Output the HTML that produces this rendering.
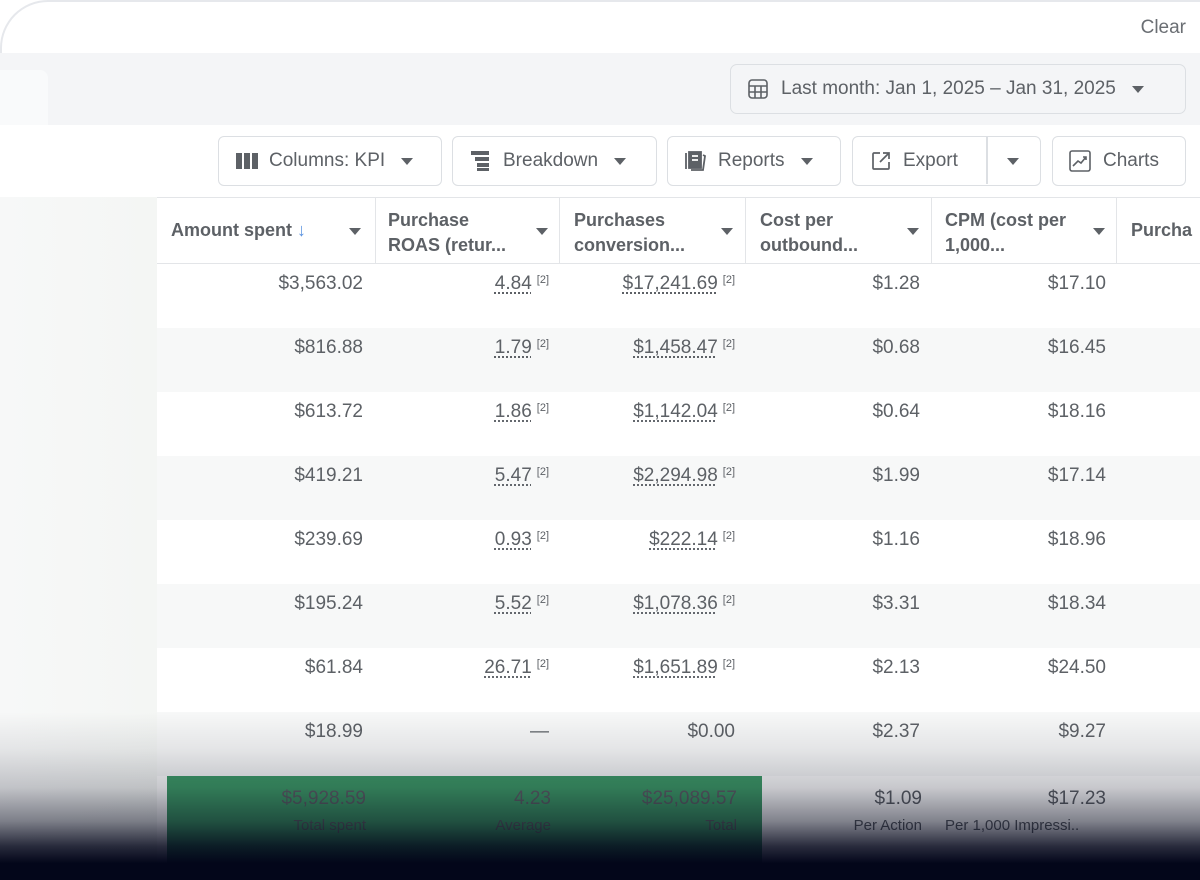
<!DOCTYPE html>
<html><head><style>
*{margin:0;padding:0;box-sizing:border-box}
body{width:1200px;height:880px;overflow:hidden;background:#fff;font-family:"Liberation Sans",sans-serif;color:#5d6166;position:relative}
.abs{position:absolute}
.top{left:0;top:0;width:1200px;height:53px;background:#fff;border-top:2px solid #e6e8ec;border-left:2px solid #e6e8ec;border-top-left-radius:48px}
.grey{left:0;top:53px;width:1200px;height:72px;background:#f4f5f7}
.btn{position:absolute;border:1.5px solid #dcdfe3;border-radius:6px;background:#fff;height:50px;top:136px;font-size:19px;color:#5d6166;display:flex;align-items:center;padding-left:16px}
.tri{display:inline-block;width:0;height:0;border-left:6px solid transparent;border-right:6px solid transparent;border-top:7px solid #5d6166}
.row{position:absolute;left:157px;width:1043px;height:64px}
.c{position:absolute;font-size:19px;text-align:right}
.u{text-decoration:underline dotted;text-underline-offset:4px}
sup{font-size:11px;margin-left:5px;vertical-align:6px;text-decoration:none;display:inline-block}
.h{position:absolute;top:208px;font-size:18px;font-weight:bold;line-height:25px;color:#5d6166}
.vl{position:absolute;top:197px;height:67px;width:1px;background:#e3e5e8}
</style></head><body>
<div class="abs top"></div>
<div class="abs" style="right:14px;top:17px;font-size:19px;color:#6a6e73">Clear</div>
<div class="abs grey"></div>
<div class="abs" style="left:0;top:70px;width:48px;height:55px;background:#f9fafb;border-top-right-radius:8px"></div>
<div class="abs" style="left:0;top:197px;width:157px;height:683px;background:linear-gradient(90deg,#f7f8f8,#f4f6f4)"></div>
<div class="abs" style="left:730px;top:64px;width:456px;height:50px;border:1.5px solid #dcdfe3;border-radius:7px;background:#f4f5f7;font-size:19px;display:flex;align-items:center;padding-left:16px">
<svg width="22" height="22" viewBox="0 0 22 22" fill="none" stroke="#5d6166" stroke-width="1.6"><rect x="2" y="2" width="18" height="18" rx="3"/><path d="M2 8h18M2 14h18M8 8v12M14 8v12"/></svg>
<span style="margin-left:12px">Last month: Jan 1, 2025 – Jan 31, 2025</span><span class="tri" style="margin-left:16px"></span></div>

<div class="btn" style="left:218px;width:224px"><svg width="24" height="20" viewBox="0 0 24 20" fill="#5d6166"><rect x="1" y="2" width="6" height="16"/><rect x="9" y="2" width="6" height="16"/><rect x="17" y="2" width="6" height="16"/></svg><span style="margin-left:10px">Columns: KPI</span><span class="tri" style="margin-left:16px"></span></div>
<div class="btn" style="left:452px;width:205px"><svg width="22" height="22" viewBox="0 0 22 22" fill="#5d6166"><rect x="2" y="1" width="18" height="4"/><rect x="6" y="7" width="14" height="4"/><rect x="8" y="13" width="12" height="4"/><rect x="8" y="18" width="12" height="3"/></svg><span style="margin-left:12px">Breakdown</span><span class="tri" style="margin-left:16px"></span></div>
<div class="btn" style="left:667px;width:174px"><svg width="24" height="22" viewBox="0 0 24 22" fill="none" stroke="#5d6166" stroke-width="1.8"><rect x="5" y="2" width="12" height="16" fill="#5d6166"/><path d="M2 3v16M19 5l2 1-2 14H7" /><path d="M8 6h6M8 10h6" stroke="#fff"/></svg><span style="margin-left:10px">Reports</span><span class="tri" style="margin-left:16px"></span></div>
<div class="btn" style="left:852px;width:189px;padding-left:18px"><svg width="20" height="20" viewBox="0 0 20 20" fill="none" stroke="#5d6166" stroke-width="1.7"><path d="M9 2H3a1 1 0 0 0-1 1v14a1 1 0 0 0 1 1h14a1 1 0 0 0 1-1v-6M12 2h6v6M18 2l-9 9"/></svg><span style="margin-left:12px">Export</span><span style="position:absolute;left:133px;top:0;width:1.5px;height:47px;background:#dcdfe3"></span><span class="tri" style="position:absolute;left:154px;top:21px"></span></div>
<div class="btn" style="left:1052px;width:134px"><svg width="22" height="22" viewBox="0 0 22 22" fill="none" stroke="#5d6166" stroke-width="1.6"><rect x="1" y="1" width="20" height="20" rx="2"/><path d="M4 16l5-5 3 2 5-6M14 7h3v3"/></svg><span style="margin-left:12px">Charts</span></div>

<div class="abs" style="left:157px;top:197px;width:1043px;height:67px;border-top:1.5px solid #e3e5e8;border-bottom:1.5px solid #e3e5e8;background:#fff"></div>
<div class="vl" style="left:375px"></div><div class="vl" style="left:559px"></div><div class="vl" style="left:745px"></div><div class="vl" style="left:931px"></div><div class="vl" style="left:1116px"></div>
<div class="h" style="left:171px;top:218px">Amount spent <span style="color:#5b93e0;font-weight:normal">↓</span></div>
<div class="h" style="left:388px">Purchase<br>ROAS (retur...</div>
<div class="h" style="left:574px">Purchases<br>conversion...</div>
<div class="h" style="left:760px">Cost per<br>outbound...</div>
<div class="h" style="left:945px">CPM (cost per<br>1,000...</div>
<div class="h" style="left:1131px;top:218px">Purcha</div>
<span class="tri abs" style="left:349px;top:228px"></span><span class="tri abs" style="left:536px;top:228px"></span><span class="tri abs" style="left:721px;top:228px"></span><span class="tri abs" style="left:907px;top:228px"></span><span class="tri abs" style="left:1093px;top:228px"></span>

<div id="rows"></div>
<script>
var d=[["$3,563.02","4.84","$17,241.69","$1.28","$17.10"],["$816.88","1.79","$1,458.47","$0.68","$16.45"],["$613.72","1.86","$1,142.04","$0.64","$18.16"],["$419.21","5.47","$2,294.98","$1.99","$17.14"],["$239.69","0.93","$222.14","$1.16","$18.96"],["$195.24","5.52","$1,078.36","$3.31","$18.34"],["$61.84","26.71","$1,651.89","$2.13","$24.50"],["$18.99","—","$0.00","$2.37","$9.27"]];
var h="";
d.forEach(function(r,i){var t=264+i*64;
h+='<div class="row" style="top:'+t+'px;background:'+(i%2?'#f7f8f8':'#fff')+'"></div>';
var y=t+9;
h+='<div class="c" style="right:837px;top:'+y+'px">'+r[0]+'</div>';
if(r[1]=="—")h+='<div class="c" style="right:651px;top:'+y+'px">—</div>';
else h+='<div class="c" style="right:651px;top:'+y+'px"><span class="u">'+r[1]+'</span><sup>[2]</sup></div>';
if(i==7)h+='<div class="c" style="right:465px;top:'+y+'px">'+r[2]+'</div>';
else h+='<div class="c" style="right:465px;top:'+y+'px"><span class="u">'+r[2]+'</span><sup>[2]</sup></div>';
h+='<div class="c" style="right:280px;top:'+y+'px">'+r[3]+'</div>';
h+='<div class="c" style="right:94px;top:'+y+'px">'+r[4]+'</div>';});
document.getElementById("rows").innerHTML=h;
</script>
<div class="abs" style="left:167px;top:776px;width:595px;height:104px;background:#3f9c68"></div>
<div class="c" style="right:834px;top:788px">$5,928.59</div><div class="c" style="right:834px;top:817px;font-size:15px">Total spent</div>
<div class="c" style="right:649px;top:788px">4.23</div><div class="c" style="right:649px;top:817px;font-size:15px">Average</div>
<div class="c" style="right:463px;top:788px">$25,089.57</div><div class="c" style="right:463px;top:817px;font-size:15px">Total</div>
<div class="c" style="right:278px;top:788px">$1.09</div><div class="c" style="right:278px;top:817px;font-size:15px">Per Action</div>
<div class="c" style="right:94px;top:788px">$17.23</div><div class="c" style="left:945px;top:817px;font-size:15px;text-align:left">Per 1,000 Impressi..</div>
<div class="abs" style="left:0;top:712px;width:1200px;height:168px;background:linear-gradient(180deg,rgba(3,6,26,0) 0%,rgba(3,6,26,0.08) 22%,rgba(3,6,26,0.22) 45%,rgba(3,6,26,0.5) 65%,rgba(3,6,26,0.85) 80%,#03061a 90%)"></div>
</body></html>
